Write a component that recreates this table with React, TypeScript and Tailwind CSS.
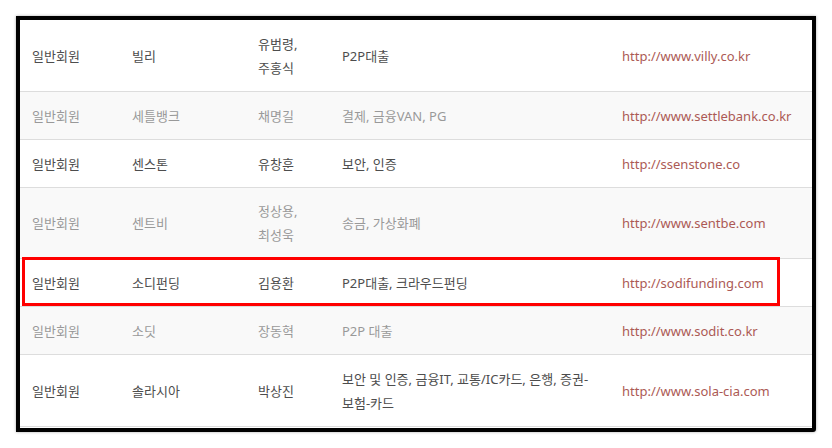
const ROWS = [
  { type: "일반회원", name: "빌리", ceo: ["유범령,", "주홍식"], biz: ["P2P대출"], url: "http://www.villy.co.kr", tall: true },
  { type: "일반회원", name: "세틀뱅크", ceo: ["채명길"], biz: ["결제, 금융VAN, PG"], url: "http://www.settlebank.co.kr" },
  { type: "일반회원", name: "센스톤", ceo: ["유창훈"], biz: ["보안, 인증"], url: "http://ssenstone.co" },
  { type: "일반회원", name: "센트비", ceo: ["정상용,", "최성욱"], biz: ["송금, 가상화폐"], url: "http://www.sentbe.com", tall: true },
  { type: "일반회원", name: "소디펀딩", ceo: ["김용환"], biz: ["P2P대출, 크라우드펀딩"], url: "http://sodifunding.com", mark: true },
  { type: "일반회원", name: "소딧", ceo: ["장동혁"], biz: ["P2P 대출"], url: "http://www.sodit.co.kr" },
  { type: "일반회원", name: "솔라시아", ceo: ["박상진"], biz: ["보안 및 인증, 금융IT, 교통/IC카드, 은행, 증권-", "보험-카드"], url: "http://www.sola-cia.com", tall: true },
];

export default function App() {
  return (
    <div
      className="w-[832px] h-[448px] bg-white pt-4 pl-4"
      style={{ fontFamily: '"Noto Sans", "Noto Sans CJK KR", sans-serif' }}
    >
      <div className="w-[800px] h-[416px] border-4 border-black rounded-br-[3px] shadow-[0_0_3px_rgba(0,0,0,0.35)] bg-white overflow-hidden">
        {ROWS.map((r, i) => {
          const odd = i % 2 === 1;
          return (
            <div
              key={r.name}
              className={`relative flex items-center border-b border-[#dddddd] text-[13px] leading-6 ${
                r.tall ? (i === 3 ? "h-[71px]" : "h-[72px]") : "h-12"
              } ${odd ? "bg-[#f9f9f9] text-[#999999]" : "bg-white text-[#4d4d4d]"}`}
            >
              <div className="w-[112px] pl-3">{r.type}</div>
              <div className="w-[126px]">{r.name}</div>
              <div className="w-[84px]">
                {r.ceo.map((c) => (
                  <div key={c}>{c}</div>
                ))}
              </div>
              <div className="w-[280px]">
                {r.biz.map((b) => (
                  <div key={b} className="whitespace-nowrap">{b}</div>
                ))}
              </div>
              <div className="flex-1 text-[#ac5a55]">{r.url}</div>
              {r.mark && (
                <div className="absolute left-[2px] top-[-2px] w-[758px] h-[49px] border-[3px] border-[#ff0000]" />
              )}
            </div>
          );
        })}
      </div>
    </div>
  );
}
